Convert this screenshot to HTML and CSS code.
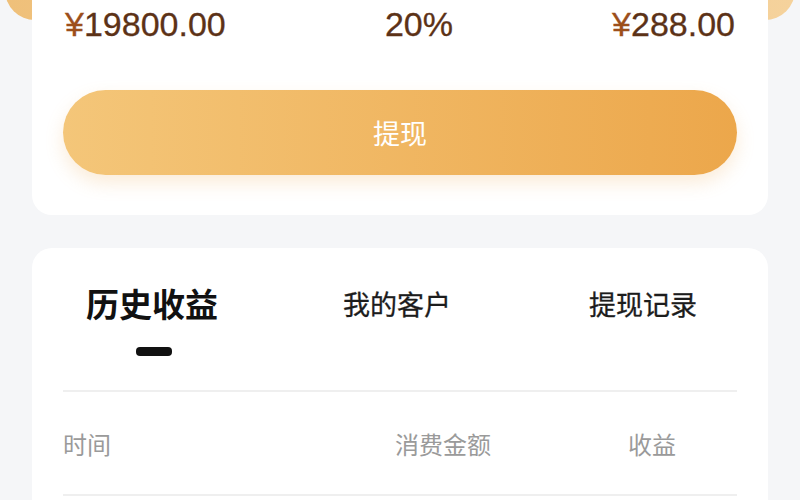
FILE: index.html
```html
<!DOCTYPE html>
<html lang="zh-CN">
<head>
<meta charset="utf-8">
<title>收益</title>
<link rel="stylesheet" href="styles.css">
</head>
<body>
<div class="page">
  <div class="header-bg"></div>
  <section class="card summary">
    <div class="amounts">
      <span class="amount"><span class="yen">¥</span>19800.00</span>
      <span class="amount">20%</span>
      <span class="amount"><span class="yen">¥</span>288.00</span>
    </div>
    <button class="withdraw">提现</button>
  </section>
  <section class="card records">
    <div class="tabs">
      <div class="tab tab-active">历史收益</div>
      <div class="tab tab-mid">我的客户</div>
      <div class="tab tab-last">提现记录</div>
    </div>
    <div class="indicator"></div>
    <div class="table-head">
      <span>时间</span>
      <span>消费金额</span>
      <span>收益</span>
    </div>
  </section>
</div>
</body>
</html>
```

FILE: styles.css
```css
* { box-sizing: border-box; }
html, body {
  margin: 0;
  padding: 0;
}
body {
  background: #f5f6f8;
  font-family: "Noto Sans CJK SC", "Liberation Sans", sans-serif;
  width: 800px;
  height: 500px;
  overflow: hidden;
}
.page {
  width: 800px;
}
.header-bg {
  height: 60px;
  margin: -40px 5px 0;
  background: linear-gradient(90deg, #efc07a, #f5d29c);
  border-radius: 0 0 30px 30px;
}
.card {
  background: #ffffff;
  margin: 0 32px;
  border-radius: 20px;
}
.summary {
  margin-top: -40px;
  padding: 24px 31px 40px;
}
.amounts {
  display: flex;
  justify-content: space-between;
  padding: 0 2px;
  height: 40px;
  line-height: 40px;
}
.amount {
  font-family: "Liberation Sans", "Noto Sans CJK SC", sans-serif;
  font-size: 34px;
  color: #5c3217;
  -webkit-text-stroke: 0.3px #5c3217;
}
.yen {
  color: #9c4f1b;
  -webkit-text-stroke: 0.3px #9c4f1b;
}
.withdraw {
  display: block;
  width: 100%;
  height: 85px;
  margin-top: 46px;
  border: none;
  border-radius: 43px;
  background: linear-gradient(90deg, #f4c679, #eca74b);
  box-shadow: 0 8px 18px rgba(238, 170, 80, 0.22);
  color: #ffffff;
  font-family: "Noto Sans CJK SC", sans-serif;
  font-size: 27px;
  padding: 0;
}
.records {
  margin-top: 33px;
  padding: 35px 31px 0;
  height: 252px;
  border-radius: 20px 20px 0 0;
}
.tabs {
  display: flex;
  align-items: center;
  height: 40px;
}
.tab {
  font-size: 27px;
  font-weight: 400;
  color: #1c1c1c;
  -webkit-text-stroke: 0.3px #1c1c1c;
  line-height: 1;
  white-space: nowrap;
}
.tab-active {
  margin-left: 23px;
  font-size: 33px;
  font-weight: 700;
  color: #111111;
  -webkit-text-stroke: 0;
}
.tab-mid {
  margin-left: 125px;
}
.tab-last {
  margin-left: 138px;
}
.indicator {
  width: 36px;
  height: 9px;
  margin: 24px 0 0 73px;
  background: #111111;
  border-radius: 4px;
}
.table-head {
  margin-top: 34px;
  height: 106px;
  border-top: 2px solid #efefef;
  border-bottom: 2px solid #efefef;
  display: grid;
  grid-template-columns: 332px 233px 1fr;
  align-items: center;
  font-size: 24px;
  color: #9a9a9a;
}
```
